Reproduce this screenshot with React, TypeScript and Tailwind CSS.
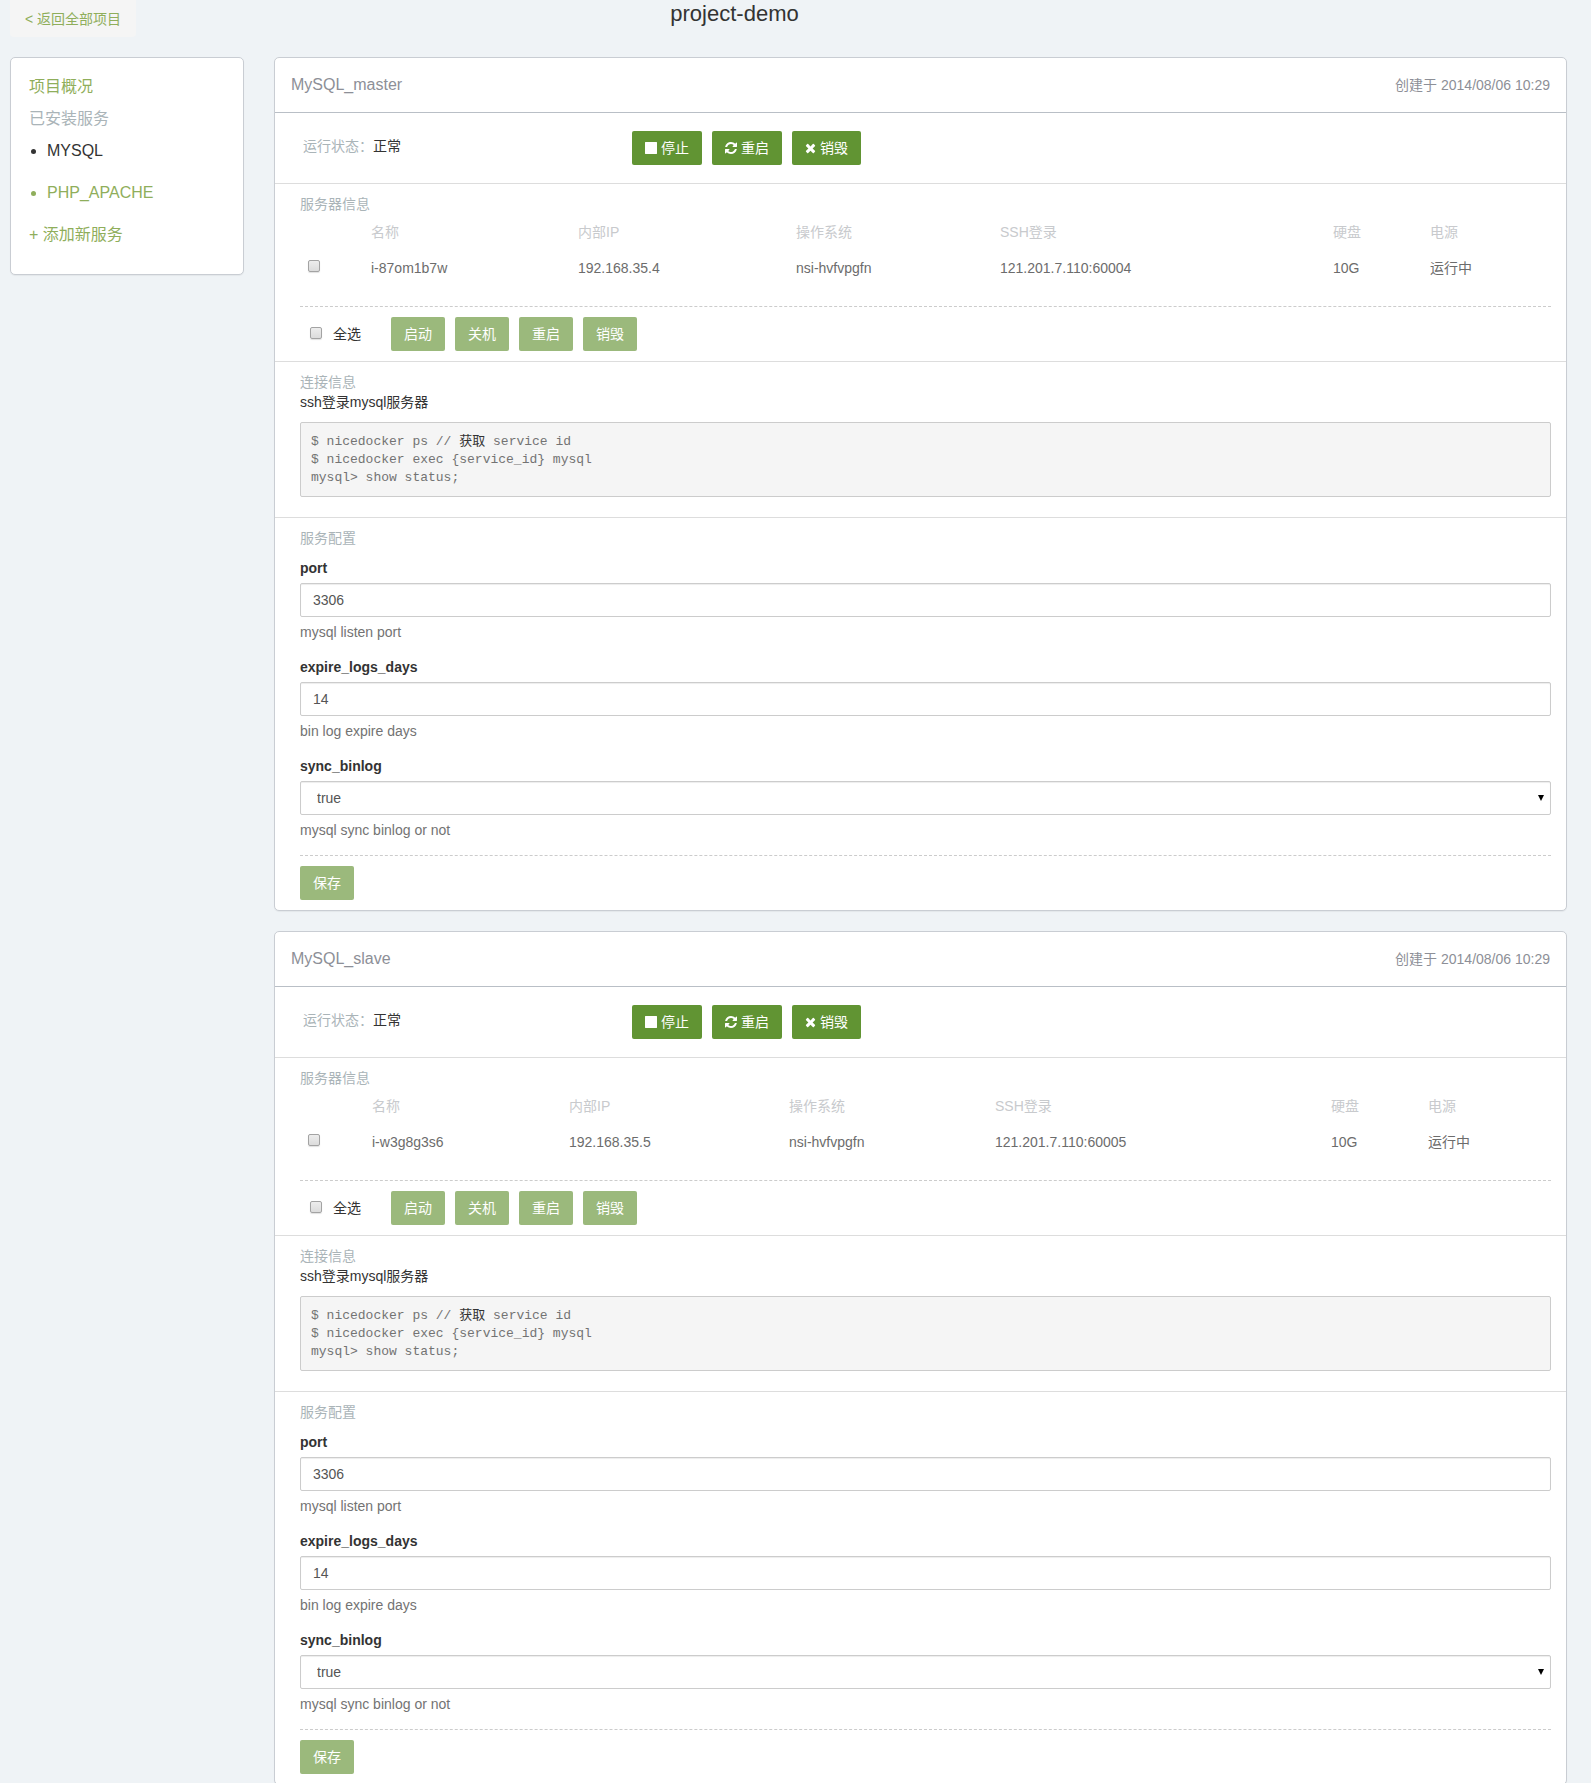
import { useState } from 'react';

type Server = { name: string; ip: string; os: string; ssh: string; disk: string; power: string };
type Service = { id: string; title: string; created: string; cols: string[]; server: Server };

const services: Service[] = [
  {
    id: 'master',
    title: 'MySQL_master',
    created: '创建于 2014/08/06 10:29',
    cols: ['w-[63px]', 'w-[207px]', 'w-[218px]', 'w-[204px]', 'w-[333px]', 'w-[97px]', 'w-[129px]'],
    server: { name: 'i-87om1b7w', ip: '192.168.35.4', os: 'nsi-hvfvpgfn', ssh: '121.201.7.110:60004', disk: '10G', power: '运行中' },
  },
  {
    id: 'slave',
    title: 'MySQL_slave',
    created: '创建于 2014/08/06 10:29',
    cols: ['w-[64px]', 'w-[197px]', 'w-[220px]', 'w-[206px]', 'w-[336px]', 'w-[97px]', 'w-[131px]'],
    server: { name: 'i-w3g8g3s6', ip: '192.168.35.5', os: 'nsi-hvfvpgfn', ssh: '121.201.7.110:60005', disk: '10G', power: '运行中' },
  },
];

const StopIcon = () => (
  <svg aria-hidden="true" className="size-3 shrink-0 fill-current" viewBox="128 128 1536 1536">
    <path d="M1664 192v1408q0 26-19 45t-45 19h-1408q-26 0-45-19t-19-45v-1408q0-26 19-45t45-19h1408q26 0 45 19t19 45z" />
  </svg>
);

const RefreshIcon = () => (
  <svg aria-hidden="true" className="size-3 shrink-0 fill-current" viewBox="128 128 1536 1536">
    <path d="M1639 1056q0 5-1 7-64 268-268 434.5t-478 166.5q-146 0-282.5-55t-243.5-157l-129 129q-19 19-45 19t-45-19-19-45v-448q0-26 19-45t45-19h448q26 0 45 19t19 45-19 45l-137 137q71 66 161 102t187 36q134 0 250-65t186-179q11-17 53-117 8-23 30-23h192q13 0 22.5 9.5t9.5 22.5zm25-800v448q0 26-19 45t-45 19h-448q-26 0-45-19t-19-45 19-45l138-138q-148-137-349-137-134 0-250 65t-186 179q-11 17-53 117-8 23-30 23h-199q-13 0-22.5-9.5t-9.5-22.5v-7q65-268 270-434.5t480-166.5q146 0 284 55.5t245 156.5l130-129q19-19 45-19t45 19 19 45z" />
  </svg>
);

const TimesIcon = () => (
  <svg aria-hidden="true" className="size-[11px] shrink-0 fill-current" viewBox="192 256 1408 1408">
    <path d="M1490 1322q0 40-28 68l-136 136q-28 28-68 28t-68-28l-294-294-294 294q-28 28-68 28t-68-28l-136-136q-28-28-28-68t28-68l294-294-294-294q-28-28-28-68t28-68l136-136q28-28 68-28t68 28l294 294 294-294q28-28 68-28t68 28l136 136q28 28 28 68t-28 68l-294 294 294 294q28 28 28 68z" />
  </svg>
);

const actionClass =
  'flex h-[34px] items-center gap-1 rounded-xs bg-[#619433] px-[13px] text-white hover:bg-[#527f2b]';
const mutedButtonClass = 'h-[34px] rounded-xs bg-[#9bb97c] px-[13px] text-white';
const checkboxClass =
  'block size-3 appearance-none rounded-xs border border-[#a3a3a3] bg-linear-to-b from-[#ededed] to-[#dcdcdc] shadow-[0_1px_1px_rgba(0,0,0,0.12)] checked:bg-none checked:bg-[#5f9332]';
const fieldClass =
  'block h-[34px] w-full rounded-xs border border-[#cccccc] bg-white text-[#555555] shadow-[inset_0_1px_1px_rgba(0,0,0,0.075)]';

function SectionTitle({ children }: { children: string }) {
  return <h3 className="text-[#aab4b8]">{children}</h3>;
}

function TextField({ id, label, initial, help }: { id: string; label: string; initial: string; help: string }) {
  const [value, setValue] = useState(initial);
  return (
    <div className="mb-[15px]">
      <label htmlFor={id} className="mb-[5px] block font-bold text-[#333333]">{label}</label>
      <input id={id} type="text" value={value} onChange={(e) => setValue(e.target.value)} className={`${fieldClass} px-3`} />
      <p className="mt-[5px] text-[#737373]">{help}</p>
    </div>
  );
}

function ServiceCard({ service }: { service: Service }) {
  const { id, title, created, cols, server } = service;
  const [selected, setSelected] = useState(false);
  return (
    <section className="mb-5 rounded-[5px] border border-[#c9cdd3] bg-white shadow-[0_1px_1px_rgba(0,0,0,0.05)]">
      <header className="flex items-center justify-between border-b border-[#b9bfc6] px-4 py-[17px] text-[#8d8f97]">
        <h2 className="text-base leading-5">{title}</h2>
        <span>{created}</span>
      </header>

      <div className="flex items-center border-b border-[#dddddd] py-[18px] pl-7">
        <p className="w-[329px] pb-1 text-[#333333]">
          <span className="text-[#aab4b8]">运行状态：</span>正常
        </p>
        <div className="flex gap-[10px]">
          <button type="button" className={actionClass}><StopIcon />停止</button>
          <button type="button" className={actionClass}><RefreshIcon />重启</button>
          <button type="button" className={actionClass}><TimesIcon />销毁</button>
        </div>
      </div>

      <div className="border-b border-[#dddddd] py-[10px] pr-[15px] pl-[25px]">
        <SectionTitle>服务器信息</SectionTitle>
        <table className="mb-5 w-full table-fixed text-left">
          <colgroup>
            {cols.map((c, i) => <col key={i} className={c} />)}
          </colgroup>
          <thead>
            <tr className="text-[#c8cacd]">
              <td className="p-2" />
              {['名称', '内部IP', '操作系统', 'SSH登录', '硬盘', '电源'].map((h) => (
                <th key={h} scope="col" className="p-2 font-normal">{h}</th>
              ))}
            </tr>
          </thead>
          <tbody>
            <tr className="text-[#6c6c6c]">
              <td className="px-2 pb-1">
                <input type="checkbox" aria-label={server.name} checked={selected} onChange={(e) => setSelected(e.target.checked)} className={checkboxClass} />
              </td>
              <td className="p-2">{server.name}</td>
              <td className="p-2">{server.ip}</td>
              <td className="p-2">{server.os}</td>
              <td className="p-2">{server.ssh}</td>
              <td className="p-2">{server.disk}</td>
              <td className="p-2">{server.power}</td>
            </tr>
          </tbody>
        </table>
        <div className="flex items-center gap-[10px] border-t border-dashed border-[#cccccc] pt-[10px]">
          <label className="mr-5 flex items-center gap-[11px] pl-[10px] text-[#333333]">
            <input type="checkbox" checked={selected} onChange={(e) => setSelected(e.target.checked)} className={`${checkboxClass} mb-[2px]`} />
            全选
          </label>
          {['启动', '关机', '重启', '销毁'].map((t) => (
            <button key={t} type="button" className={mutedButtonClass}>{t}</button>
          ))}
        </div>
      </div>

      <div className="border-b border-[#dddddd] pt-[10px] pr-[15px] pb-5 pl-[25px]">
        <SectionTitle>连接信息</SectionTitle>
        <p className="mb-[10px] text-[#333333]">ssh登录mysql服务器</p>
        <pre className="overflow-hidden rounded-xs border border-[#cccccc] bg-[#f5f5f5] px-[10px] pt-[10px] pb-[9px] font-['Liberation_Mono','Noto_Sans_CJK_SC',monospace] text-[13px] leading-[18px] text-[#737373]">
          <code className="flex h-[18px] font-[inherit]">
            {'$ nicedocker ps // '}<span className="text-[#333333]">获取</span>{' service id'}
          </code>
          <code className="block h-[18px] font-[inherit]">{'$ nicedocker exec {service_id} mysql'}</code>
          <code className="block h-[18px] font-[inherit]">{'mysql> show status;'}</code>
        </pre>
      </div>

      <form className="py-[10px] pr-[15px] pl-[25px]" onSubmit={(e) => e.preventDefault()}>
        <div className="mb-[10px]"><SectionTitle>服务配置</SectionTitle></div>
        <TextField id={`${id}-port`} label="port" initial="3306" help="mysql listen port" />
        <TextField id={`${id}-expire`} label="expire_logs_days" initial="14" help="bin log expire days" />
        <div className="mb-[15px]">
          <label htmlFor={`${id}-sync`} className="mb-[5px] block font-bold text-[#333333]">sync_binlog</label>
          <div className="relative">
            <select id={`${id}-sync`} defaultValue="true" className={`${fieldClass} appearance-none px-4`}>
              <option value="true">true</option>
              <option value="false">false</option>
            </select>
            <svg aria-hidden="true" className="pointer-events-none absolute top-[14px] right-[7px] h-[6px] w-[6px] fill-black" viewBox="0 0 6 6">
              <path d="M0 0h6L3 6z" />
            </svg>
          </div>
          <p className="mt-[5px] text-[#737373]">mysql sync binlog or not</p>
        </div>
        <div className="border-t border-dashed border-[#cccccc] pt-[10px]">
          <button type="submit" className={mutedButtonClass}>保存</button>
        </div>
      </form>
    </section>
  );
}

export default function App() {
  return (
    <div className="min-h-screen bg-[#eff3f6] font-['Liberation_Sans','Noto_Sans_CJK_SC',sans-serif] text-sm leading-5">
      <header className="mb-5 grid grid-cols-[1fr_auto_1fr] items-start pr-[122px]">
        <div className="flex pl-[10px]">
          <a href="#projects" className="rounded-b-sm bg-[#f5f5f5] px-[15px] pt-[9px] pb-2 text-[#8fae5b]">&lt; 返回全部项目</a>
        </div>
        <h1 className="pt-1 text-[22px] leading-5 text-[#333333]">project-demo</h1>
      </header>

      <div className="flex items-start gap-[30px] pr-6 pl-[10px]">
        <nav className="w-[234px] shrink-0 rounded-[5px] border border-[#c9cdd3] bg-white px-[18px] pt-[18px] pb-7 text-base leading-[22px] text-[#8fae5b] shadow-[0_1px_1px_rgba(0,0,0,0.05)]">
          <a href="#overview" className="block">项目概况</a>
          <p className="my-[10px] text-[#aab4b8]">已安装服务</p>
          <ul className="mb-5 flex flex-col gap-5">
            <li className="flex items-center gap-[11px] pl-[2px] text-[#333333]">
              <span className="size-[5px] rounded-full bg-current" />
              <a href="#mysql">MYSQL</a>
            </li>
            <li className="flex items-center gap-[11px] pl-[2px]">
              <span className="size-[5px] rounded-full bg-current" />
              <a href="#php-apache">PHP_APACHE</a>
            </li>
          </ul>
          <a href="#add" className="block">+ 添加新服务</a>
        </nav>

        <main className="min-w-0 flex-1">
          {services.map((s) => <ServiceCard key={s.id} service={s} />)}
        </main>
      </div>
    </div>
  );
}
